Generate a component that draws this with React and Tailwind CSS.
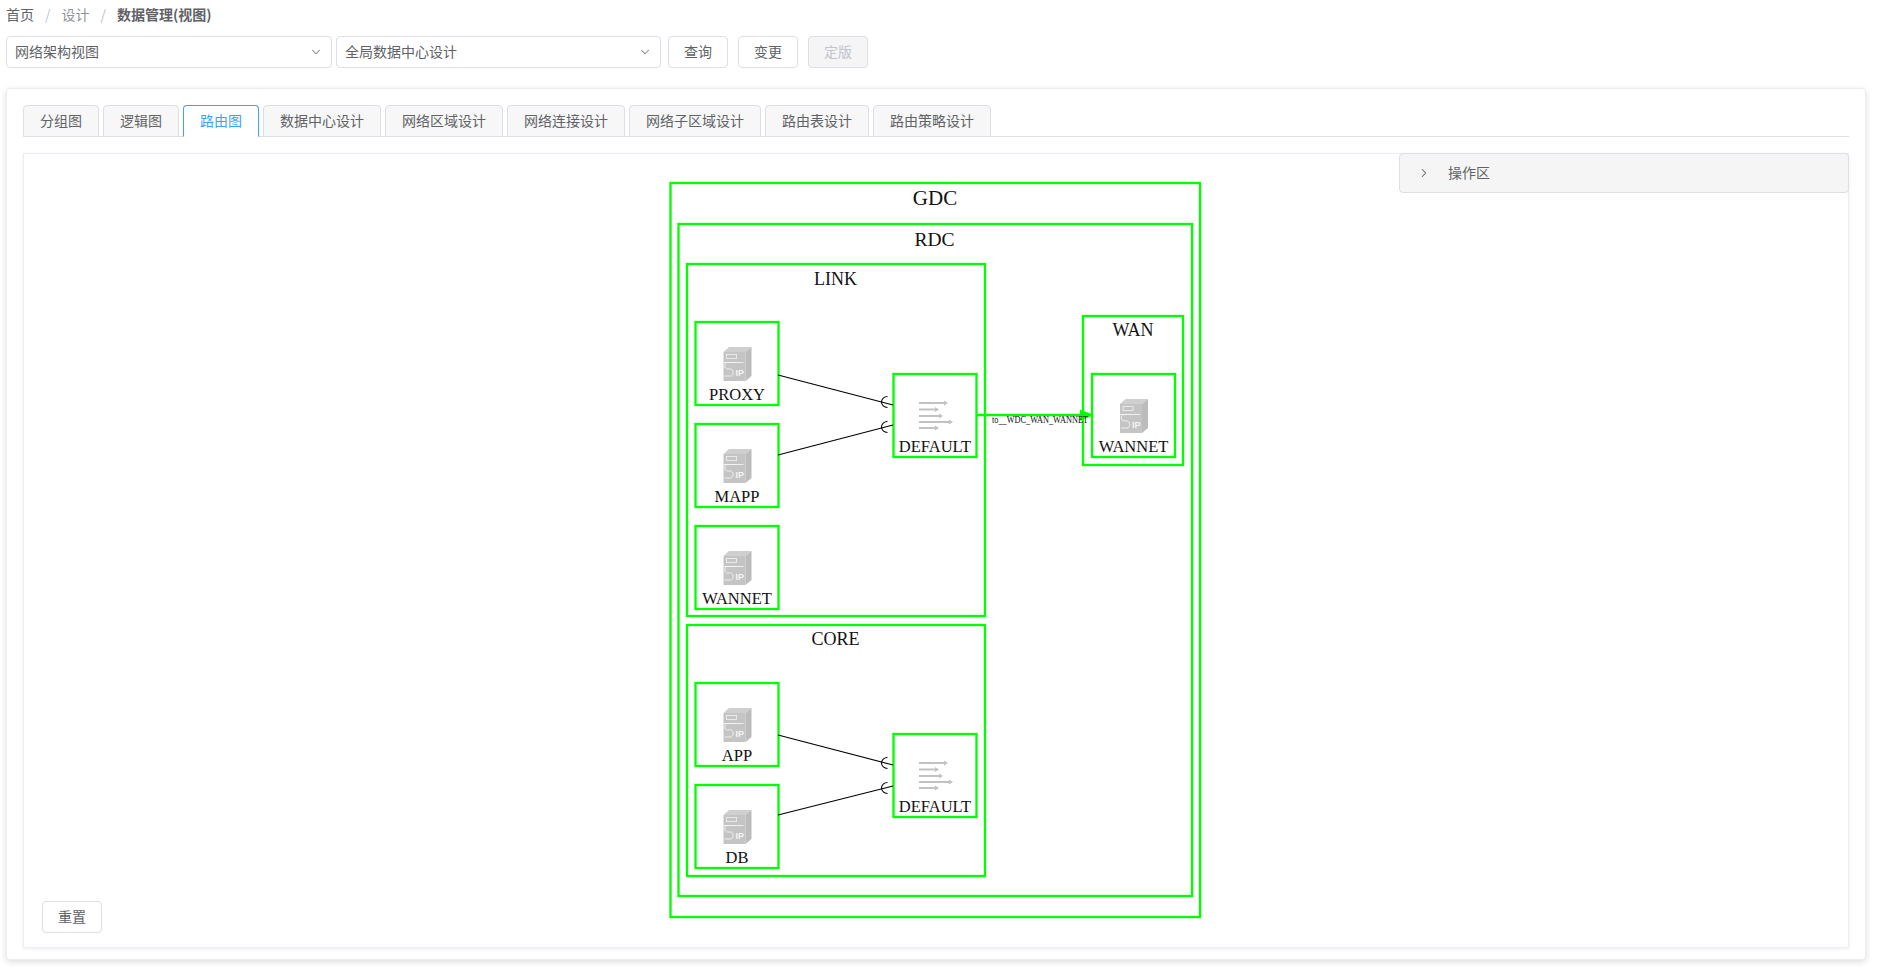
import { ChevronDown, ChevronRight } from 'lucide-react'

const FONT = "font-['Noto_Sans_CJK_SC','Noto_Sans',sans-serif]"
const tabs = ['分组图', '逻辑图', '路由图', '数据中心设计', '网络区域设计', '网络连接设计', '网络子区域设计', '路由表设计', '路由策略设计']

const Select = ({ value, width }) => (
    <div className={`${width} h-8 flex items-center justify-between pl-2 pr-2 pb-[2px] border border-[#dcdfe6] rounded bg-white text-sm text-[#606266]`}>
        <span>{value}</span>
        <ChevronDown size={14} strokeWidth={1.8} className="text-[#7f848c] mt-[2px]" />
    </div>
)

const Button = ({ children, disabled }) => (
    <button className={`w-[60px] h-8 pb-[2px] border rounded text-sm ${disabled ? 'border-[#dcdfe6] bg-[#f5f5f5] text-[#c0c4cc]' : 'border-[#dcdfe6] bg-white text-[#606266]'}`}>
        {children}
    </button>
)

// server + "IP" picture used by the leaf nodes
const ServerIcon = ({ x, y }) => (
    <g transform={`translate(${x} ${y})`}>
        <polygon points="0,5 5.5,0 28,0 22,5" fill="#cfcfcf" />
        <polygon points="0,5 22,5 22,34 0,34" fill="#c4c4c4" />
        <polygon points="22,5 28,0 28,29 22,34" fill="#bcbcbc" />
        <rect x="3" y="7.5" width="10" height="4" fill="none" stroke="#ededed" strokeWidth="0.9" />
        <path d="M0 15.5H20M12 15.5H4C0.5 15.5 0.5 22 4 22H7C10.5 22 10.5 29 7 29H1" fill="none" stroke="#f4f4f4" strokeWidth="0.9" />
        <text x="12" y="28.5" fontSize="9" fontWeight="700" fontFamily="'Liberation Sans', sans-serif" fill="#f4f4f4">IP</text>
    </g>
)

// stack of arrows used by the DEFAULT nodes
const RouteIcon = ({ x, y }) => (
    <g transform={`translate(${x} ${y})`} stroke="#c2c2c2" fill="#c2c2c2" strokeWidth="2">
        {[[0, 29], [6.5, 20], [13, 24], [19, 34], [25, 20]].map(([dy, len]) => (
            <g key={dy}>
                <line x1="0" y1={dy} x2={len - 2} y2={dy} />
                <polygon points={`${len - 4},${dy - 2.5} ${len},${dy} ${len - 4},${dy + 2.5}`} stroke="none" />
            </g>
        ))}
    </g>
)

const Box = ({ x, y, w, h }) => (
    <g fill="none" stroke="#00ff00">
        <rect x={x} y={y} width={w} height={h} strokeWidth="3" strokeOpacity="0.3" />
        <rect x={x} y={y} width={w} height={h} strokeWidth="2" />
    </g>
)

const Label = ({ x, y, size = 16.5, children }) => (
    <text x={x} y={y} fontSize={size} textAnchor="middle" fill="#111" fontFamily="'Liberation Serif', serif">{children}</text>
)

const Node = ({ x, y, label, route }) => (
    <g>
        <Box x={x} y={y} w={83} h={83} />
        {route ? <RouteIcon x={x + 25.5} y={y + 29} /> : <ServerIcon x={x + 28} y={y + 25} />}
        <Label x={x + 41.5} y={y + 78}>{label}</Label>
    </g>
)

// line ending in a socket arc just left of the target box
const Link = ({ x1, y1, x2, y2, cy }) => (
    <g fill="none" stroke="#000" strokeWidth="1.1">
        <line x1={x1} y1={y1} x2={x2} y2={y2} />
        <path d={`M${x2 - 5.5} ${cy - 5.5}A6 5.5 0 0 0 ${x2 - 5.5} ${cy + 5.5}`} />
    </g>
)

const Diagram = () => (
    <svg width="534" height="760" viewBox="668 170 534 760" className="block ml-[644px] mt-4">
        <Box x={670.5} y={183} w={529.5} h={734} />
        <Label x={935} y={205} size={21}>GDC</Label>
        <Box x={678.5} y={224} w={513.5} h={672} />
        <Label x={934.5} y={246} size={19.5}>RDC</Label>

        <Box x={687} y={264} w={298} h={352} />
        <Label x={835.5} y={285} size={18}>LINK</Label>
        <Node x={695.5} y={322} label="PROXY" />
        <Node x={695.5} y={424} label="MAPP" />
        <Node x={695.5} y={526} label="WANNET" />
        <Node x={893.5} y={374} label="DEFAULT" route />
        <Link x1={778} y1={375} x2={893} y2={405} cy={402} />
        <Link x1={778} y1={455} x2={893} y2={425} cy={427} />

        <Box x={687} y={625} w={298} h={251} />
        <Label x={835.5} y={645} size={18}>CORE</Label>
        <Node x={695.5} y={683} label="APP" />
        <Node x={695.5} y={785} label="DB" />
        <Node x={893.5} y={734} label="DEFAULT" route />
        <Link x1={778} y1={735} x2={893} y2={765} cy={763} />
        <Link x1={778} y1={815} x2={893} y2={786} cy={788} />

        <Box x={1083} y={316} w={100} h={149} />
        <Label x={1133} y={336} size={18}>WAN</Label>
        <Node x={1092} y={374} label="WANNET" />

        <line x1={977} y1={415} x2={1084} y2={415} stroke="#00ff00" strokeWidth="2.4" />
        <polygon points="1080,409.5 1094,415 1080,420.5" fill="#00ff00" />
        <text x={992} y={423} fontSize="10" textLength="96" lengthAdjust="spacingAndGlyphs" fill="#111" fontFamily="'Liberation Serif', serif">to__WDC_WAN_WANNET</text>
    </svg>
)

const App = () => {
    return (
        <div className={`${FONT} w-[1877px] h-[970px] bg-white px-[6px] pt-[4px] overflow-hidden`}>
            <div className="h-5 flex items-center text-sm text-[#606266]">
                <span>首页</span>
                <span className="mx-[11px] text-[#c0c4cc]">/</span>
                <span className="text-[#909399]">设计</span>
                <span className="mx-[11px] text-[#c0c4cc]">/</span>
                <span className="font-bold">数据管理(视图)</span>
            </div>
            <div className="flex items-center mt-[12px]">
                <Select value="网络架构视图" width="w-[326px]" />
                <div className="w-1" />
                <Select value="全局数据中心设计" width="w-[325px]" />
                <div className="w-[7px]" />
                <div className="flex gap-[10px]">
                    <Button>查询</Button>
                    <Button>变更</Button>
                    <Button disabled>定版</Button>
                </div>
            </div>
            <div className="mt-[20px] w-[1860px] h-[872px] rounded bg-white px-[16px] pt-4 border border-[#ededed] shadow-[0_2px_6px_rgba(0,0,0,0.14)]">
                <div className="flex gap-1 h-8 border-b border-[#dcdfe6]">
                    {tabs.map((tab) => (
                        <div
                            key={tab}
                            className={tab === '路由图'
                                ? 'h-8 px-4 pb-[2px] flex items-center text-sm text-[#409eff] bg-white border border-[#409eff] border-b-white rounded-t'
                                : 'h-8 px-4 pb-[2px] flex items-center text-sm text-[#606266] bg-[#f7f7f7] border border-[#dcdfe6] rounded-t'}
                        >
                            {tab}
                        </div>
                    ))}
                </div>
                <div className="relative mt-4 h-[795px] border border-[#ebeef5] shadow-[0_1px_3px_rgba(0,0,0,0.08)]">
                    <Diagram />
                    <div className="absolute -top-px -right-px w-[450px] h-10 pb-[2px] flex items-center pl-[17px] bg-[#f5f5f5] border border-[#dcdfe6] rounded-sm text-sm text-[#606266]">
                        <ChevronRight size={14} strokeWidth={1.8} className="mt-[2px]" />
                        <span className="ml-[17px]">操作区</span>
                    </div>
                    <div className="absolute left-[18px] bottom-[14px]">
                        <Button>重置</Button>
                    </div>
                </div>
            </div>
        </div>
    )
}

export default App
